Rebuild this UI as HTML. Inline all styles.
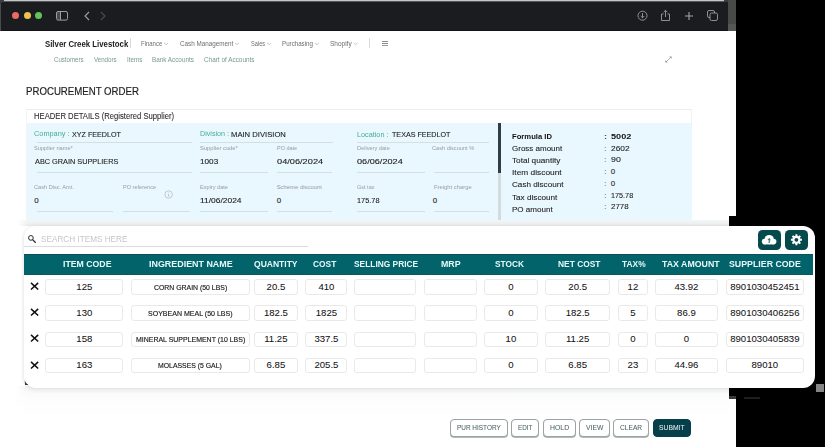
<!DOCTYPE html>
<html><head><meta charset="utf-8">
<style>
*{box-sizing:border-box;margin:0;padding:0}
html,body{width:825px;height:447px;overflow:hidden;background:#000;font-family:"Liberation Sans",sans-serif}
.a{position:absolute}
.t{position:absolute;white-space:nowrap;line-height:1;transform-origin:0 0}
#win{position:absolute;left:0;top:0;width:736px;height:447px;background:#fff;overflow:hidden}
.ul{position:absolute;height:1px;background:#d5dfe3}
.box{position:absolute;height:15.4px;border:1px solid #e9e9e9;border-radius:3px;background:#fff}
.btn{position:absolute;top:418.5px;height:18.2px;border:1px solid #9aa4a4;border-radius:4px;box-shadow:0 0.8px 0.6px #9aa3a3;background:#fff}
</style></head><body>
<div id="win">
  <div class="a" style="left:0;top:0;width:724px;height:1px;background:#c3c6c6"></div>
  <div class="a" style="left:0;top:1px;width:728px;height:1px;background:#55585a"></div>
  <div class="a" style="left:1px;top:2px;width:727px;height:29px;background:#1b1c20"></div>
  <div class="a" style="left:1px;top:30px;width:727px;height:1px;background:#131416"></div>
  <div class="a" style="left:0;top:0;width:1px;height:31px;background:#4a4c4c"></div>
  <div class="a" style="left:0;top:0;width:5px;height:5px;background:linear-gradient(135deg,#3a3d3e 50%,transparent 50%)"></div>
  <div class="a" style="left:724px;top:0;width:4px;height:2px;background:#3a3c3c"></div>
  <div class="a" style="left:728px;top:0;width:8px;height:24px;background:#484a48"></div>
  <div class="a" style="left:728px;top:24px;width:8px;height:7px;background:#555755"></div>
  <div class="a" style="left:12px;top:12px;width:7px;height:7px;border-radius:50%;background:#ec6a63"></div>
  <div class="a" style="left:23.5px;top:12px;width:7px;height:7px;border-radius:50%;background:#f3bf4f"></div>
  <div class="a" style="left:35px;top:12px;width:7px;height:7px;border-radius:50%;background:#61c454"></div>
  <svg class="a" style="left:55px;top:10px" width="15" height="12" viewBox="0 0 15 12"><rect x="2" y="2" width="3.5" height="7.5" fill="#4a4b4e"/><rect x="1.5" y="1.5" width="11" height="8.6" rx="1.5" fill="none" stroke="#9b9c9e" stroke-width="1"/><line x1="5.5" y1="1.5" x2="5.5" y2="10" stroke="#9b9c9e" stroke-width="1"/></svg>
  <svg class="a" style="left:82px;top:10px" width="10" height="12" viewBox="0 0 10 12"><path d="M7 2 L3 6 L7 10" fill="none" stroke="#a0a1a3" stroke-width="1.1"/></svg>
  <svg class="a" style="left:98px;top:10px" width="10" height="12" viewBox="0 0 10 12"><path d="M3 2 L7 6 L3 10" fill="none" stroke="#4a4c4f" stroke-width="1.1"/></svg>
  <svg class="a" style="left:636px;top:9px" width="13" height="13" viewBox="0 0 13 13"><circle cx="6.5" cy="6.7" r="4.5" fill="none" stroke="#9c9da0" stroke-width="0.9"/><path d="M6.5 4 V8.8 M4.7 7 L6.5 8.8 L8.3 7" fill="none" stroke="#9c9da0" stroke-width="0.9"/></svg>
  <svg class="a" style="left:659px;top:8px" width="13" height="14" viewBox="0 0 13 14"><path d="M4.5 6 H2.5 V12.5 H10.5 V6 H8.5" fill="none" stroke="#9c9da0" stroke-width="0.9"/><path d="M6.5 9 V2.3 M4.6 4.2 L6.5 2.3 L8.4 4.2" fill="none" stroke="#9c9da0" stroke-width="0.9"/></svg>
  <svg class="a" style="left:683px;top:10px" width="12" height="12" viewBox="0 0 12 12"><path d="M6 2 V10 M2 6 H10" fill="none" stroke="#a3a4a6" stroke-width="1.1"/></svg>
  <svg class="a" style="left:706px;top:9px" width="13" height="13" viewBox="0 0 13 13"><rect x="1.5" y="1.5" width="7" height="7" rx="1.5" fill="none" stroke="#9c9da0" stroke-width="0.9"/><rect x="4" y="4" width="7.5" height="7.5" rx="1.5" fill="#1b1c20" stroke="#9c9da0" stroke-width="0.9"/></svg>

  <div class="a" style="left:130px;top:38px;width:1px;height:10px;background:#dadada"></div>
  <div class="a" style="left:368.5px;top:38.3px;width:1px;height:9.7px;background:#dadada"></div>
  <div class="a" style="left:382px;top:41px;width:6px;height:1px;background:#8c8c8c"></div><div class="a" style="left:382px;top:43px;width:6px;height:1px;background:#8c8c8c"></div><div class="a" style="left:382px;top:45px;width:6px;height:1px;background:#9a9a9a"></div>
  <svg class="a" style="left:0;top:0" width="400" height="50" viewBox="0 0 400 50"><g fill="none" stroke="#a0a0a0" stroke-width="0.6"><path d="M164 42.8 L166 44.7 L168 42.8"/><path d="M235 42.8 L237 44.7 L239 42.8"/><path d="M267 42.8 L269 44.7 L271 42.8"/><path d="M315 42.8 L317 44.7 L319 42.8"/><path d="M353.6 42.8 L355.6 44.7 L357.6 42.8"/></g></svg>
  <svg class="a" style="left:664px;top:55px" width="9" height="9" viewBox="0 0 9 9"><path d="M2 7 L7 2" stroke="#8f8f8f" stroke-width="0.7"/><path d="M5.2 1.4 H7.6 V3.8 Z M1.4 5.2 V7.6 H3.8 Z" fill="#8f8f8f"/></svg>

  <div class="a" style="left:26px;top:109px;width:666px;height:111px;border:1px solid #ebeded;border-left-color:#f3f4f4;border-right-color:#f1f2f2;border-bottom:none;background:#fff"></div>
  <div class="a" style="left:26.5px;top:123px;width:665.5px;height:97px;background:#e9f8fe"></div>
  <div class="a" style="left:498px;top:123px;width:3px;height:97px;background:#d3dbde"></div>
  <div class="a" style="left:498px;top:123px;width:3px;height:49.5px;background:#2f3e44"></div>

  <div class="ul" style="left:36.5px;top:142px;width:155px"></div>
  <div class="ul" style="left:199.5px;top:142px;width:133px"></div>
  <div class="ul" style="left:356.5px;top:142px;width:132px"></div>
  <div class="ul" style="left:36.5px;top:172px;width:155px"></div>
  <div class="ul" style="left:199.5px;top:172px;width:68px"></div>
  <div class="ul" style="left:276.5px;top:172px;width:55.5px"></div>
  <div class="ul" style="left:356.5px;top:172px;width:68px"></div>
  <div class="ul" style="left:433.5px;top:172px;width:55px"></div>
  <div class="ul" style="left:36.5px;top:211px;width:76px"></div>
  <div class="ul" style="left:122.5px;top:211px;width:67px"></div>
  <div class="ul" style="left:199.5px;top:211px;width:68px"></div>
  <div class="ul" style="left:276.5px;top:211px;width:55.5px"></div>
  <div class="ul" style="left:356.5px;top:211px;width:68px"></div>
  <div class="ul" style="left:433.5px;top:211px;width:55px"></div>
  <svg class="a" style="left:164px;top:190px" width="9" height="9" viewBox="0 0 9 9"><circle cx="4.6" cy="4.5" r="3.7" fill="none" stroke="#a8adb0" stroke-width="0.6"/><path d="M4.6 4 V6.6" stroke="#a8adb0" stroke-width="0.7"/><circle cx="4.6" cy="2.8" r="0.4" fill="#a8adb0"/></svg>

  <div class="btn" style="left:450px;width:57.5px"></div>
  <div class="btn" style="left:511.3px;width:27.7px"></div>
  <div class="btn" style="left:543px;width:32.5px"></div>
  <div class="btn" style="left:579.3px;width:30.6px"></div>
  <div class="btn" style="left:613.3px;width:35.3px"></div>
  <div class="btn" style="left:652.6px;width:38.7px;background:#053f49;border-color:#053f49;box-shadow:none"></div>
</div>

<div class="a" style="left:729px;top:216px;width:96px;height:183px;background:#000"></div>
<div class="a" style="left:816px;top:384px;width:8px;height:8px;background:#858585"></div>
<div class="a" style="left:729px;top:396px;width:7px;height:3px;background:#3a3a3a"></div>
<div class="a" style="left:744px;top:397px;width:16px;height:2px;background:#1e1e1e"></div>

<div class="a" style="left:15px;top:386px;width:714px;height:30px;background:linear-gradient(rgba(40,60,60,0.05),rgba(40,60,60,0.02) 30%,rgba(40,60,60,0));-webkit-mask-image:linear-gradient(90deg,transparent,#000 12px)"></div>
<div class="a" style="left:18px;top:220px;width:711px;height:6px;background:linear-gradient(#f1f6f8,#eef0f0 60%,#e6e8e8);-webkit-mask-image:linear-gradient(90deg,transparent,#000 10px)"></div>
<div class="a" style="left:24px;top:226px;width:791px;height:161.5px;background:#fff;border-radius:12px;box-shadow:-1px 0 3px rgba(0,0,0,0.07),0 3px 4px rgba(0,0,0,0.05)"></div>

<svg class="a" style="left:27px;top:234px" width="10" height="10" viewBox="0 0 10 10"><circle cx="3.9" cy="3.9" r="2.35" fill="none" stroke="#2a2a2a" stroke-width="1.0"/><path d="M5.6 5.6 L8.7 8.7" stroke="#2a2a2a" stroke-width="1.3"/></svg>
<div class="a" style="left:24px;top:246px;width:284px;height:1px;background:#dcdcdc"></div>

<div class="a" style="left:758px;top:229.7px;width:22.6px;height:20px;background:#044a4c;border-radius:4.5px"></div>
<svg class="a" style="left:758px;top:230px" width="23" height="20" viewBox="0 0 23 20"><g fill="#fff"><circle cx="6.6" cy="11.6" r="2.8"/><circle cx="11.2" cy="9.6" r="4.7"/><circle cx="15.6" cy="11.6" r="2.8"/><rect x="6.6" y="10" width="9" height="4.4"/></g><path d="M11.2 13 V8.6 M9.9 9.9 L11.2 8.6 L12.5 9.9" fill="none" stroke="#044a4c" stroke-width="0.9"/></svg>
<div class="a" style="left:785.2px;top:229.7px;width:22.6px;height:20px;background:#044a4c;border-radius:4.5px"></div>
<svg class="a" style="left:785px;top:230px" width="23" height="20" viewBox="0 0 23 20"><path d="M15.36 8.75 L16.92 8.85 L16.92 10.75 L15.36 10.85 L14.95 11.86 L15.97 13.03 L14.63 14.37 L13.46 13.35 L12.45 13.76 L12.35 15.32 L10.45 15.32 L10.35 13.76 L9.34 13.35 L8.17 14.37 L6.83 13.03 L7.85 11.86 L7.44 10.85 L5.88 10.75 L5.88 8.85 L7.44 8.75 L7.85 7.74 L6.83 6.57 L8.17 5.23 L9.34 6.25 L10.35 5.84 L10.45 4.28 L12.35 4.28 L12.45 5.84 L13.46 6.25 L14.63 5.23 L15.97 6.57 L14.95 7.74 Z" fill="#fff"/><circle cx="11.4" cy="9.8" r="1.9" fill="#044a4c"/></svg>

<div class="a" style="left:24px;top:253.5px;width:789px;height:21.2px;background:#02636a;border-top:1px solid #0a5059;border-bottom:1px solid #0a5860"></div>
<svg class="a" style="left:24px;top:380px" width="6" height="6" viewBox="0 0 6 6"><path d="M0.8 0.5 Q1.5 3.5 4.5 5 L1 5 Z" fill="#333"/></svg>
<svg class="a" style="left:30px;top:281.9px" width="9.2" height="8.4" viewBox="0 0 9.2 8.4"><path d="M1 0.9 L8.2 7.5 M8.2 0.9 L1 7.5" stroke="#111" stroke-width="1.5"/></svg>
<div class="box" style="left:45.3px;top:279.3px;width:78.1px"></div>
<div class="box" style="left:131.0px;top:279.3px;width:118.5px"></div>
<div class="box" style="left:253.8px;top:279.3px;width:44.2px"></div>
<div class="box" style="left:305.3px;top:279.3px;width:42.2px"></div>
<div class="box" style="left:354.2px;top:279.3px;width:61.4px"></div>
<div class="box" style="left:423.5px;top:279.3px;width:53.0px"></div>
<div class="box" style="left:484.3px;top:279.3px;width:53.3px"></div>
<div class="box" style="left:544.9px;top:279.3px;width:65.5px"></div>
<div class="box" style="left:618.3px;top:279.3px;width:29.3px"></div>
<div class="box" style="left:655.2px;top:279.3px;width:62.4px"></div>
<div class="box" style="left:726.1px;top:279.3px;width:77.5px"></div>
<svg class="a" style="left:30px;top:308.0px" width="9.2" height="8.4" viewBox="0 0 9.2 8.4"><path d="M1 0.9 L8.2 7.5 M8.2 0.9 L1 7.5" stroke="#111" stroke-width="1.5"/></svg>
<div class="box" style="left:45.3px;top:305.4px;width:78.1px"></div>
<div class="box" style="left:131.0px;top:305.4px;width:118.5px"></div>
<div class="box" style="left:253.8px;top:305.4px;width:44.2px"></div>
<div class="box" style="left:305.3px;top:305.4px;width:42.2px"></div>
<div class="box" style="left:354.2px;top:305.4px;width:61.4px"></div>
<div class="box" style="left:423.5px;top:305.4px;width:53.0px"></div>
<div class="box" style="left:484.3px;top:305.4px;width:53.3px"></div>
<div class="box" style="left:544.9px;top:305.4px;width:65.5px"></div>
<div class="box" style="left:618.3px;top:305.4px;width:29.3px"></div>
<div class="box" style="left:655.2px;top:305.4px;width:62.4px"></div>
<div class="box" style="left:726.1px;top:305.4px;width:77.5px"></div>
<svg class="a" style="left:30px;top:334.4px" width="9.2" height="8.4" viewBox="0 0 9.2 8.4"><path d="M1 0.9 L8.2 7.5 M8.2 0.9 L1 7.5" stroke="#111" stroke-width="1.5"/></svg>
<div class="box" style="left:45.3px;top:331.8px;width:78.1px"></div>
<div class="box" style="left:131.0px;top:331.8px;width:118.5px"></div>
<div class="box" style="left:253.8px;top:331.8px;width:44.2px"></div>
<div class="box" style="left:305.3px;top:331.8px;width:42.2px"></div>
<div class="box" style="left:354.2px;top:331.8px;width:61.4px"></div>
<div class="box" style="left:423.5px;top:331.8px;width:53.0px"></div>
<div class="box" style="left:484.3px;top:331.8px;width:53.3px"></div>
<div class="box" style="left:544.9px;top:331.8px;width:65.5px"></div>
<div class="box" style="left:618.3px;top:331.8px;width:29.3px"></div>
<div class="box" style="left:655.2px;top:331.8px;width:62.4px"></div>
<div class="box" style="left:726.1px;top:331.8px;width:77.5px"></div>
<svg class="a" style="left:30px;top:360.7px" width="9.2" height="8.4" viewBox="0 0 9.2 8.4"><path d="M1 0.9 L8.2 7.5 M8.2 0.9 L1 7.5" stroke="#111" stroke-width="1.5"/></svg>
<div class="box" style="left:45.3px;top:358.1px;width:78.1px"></div>
<div class="box" style="left:131.0px;top:358.1px;width:118.5px"></div>
<div class="box" style="left:253.8px;top:358.1px;width:44.2px"></div>
<div class="box" style="left:305.3px;top:358.1px;width:42.2px"></div>
<div class="box" style="left:354.2px;top:358.1px;width:61.4px"></div>
<div class="box" style="left:423.5px;top:358.1px;width:53.0px"></div>
<div class="box" style="left:484.3px;top:358.1px;width:53.3px"></div>
<div class="box" style="left:544.9px;top:358.1px;width:65.5px"></div>
<div class="box" style="left:618.3px;top:358.1px;width:29.3px"></div>
<div class="box" style="left:655.2px;top:358.1px;width:62.4px"></div>
<div class="box" style="left:726.1px;top:358.1px;width:77.5px"></div>
<div class="t" style="left:45.10px;top:40.21px;font-size:8.6px;color:#1c1c1c;font-weight:bold;transform:scaleX(0.908);">Silver Creek Livestock</div>
<div class="t" style="left:141.00px;top:40.01px;font-size:7.2px;color:#6e6e6e;transform:scaleX(0.831);">Finance</div>
<div class="t" style="left:179.60px;top:40.01px;font-size:7.2px;color:#6e6e6e;transform:scaleX(0.878);">Cash Management</div>
<div class="t" style="left:250.70px;top:40.01px;font-size:7.2px;color:#6e6e6e;transform:scaleX(0.783);">Sales</div>
<div class="t" style="left:281.70px;top:40.01px;font-size:7.2px;color:#6e6e6e;transform:scaleX(0.861);">Purchasing</div>
<div class="t" style="left:329.80px;top:40.01px;font-size:7.2px;color:#6e6e6e;transform:scaleX(0.904);">Shopify</div>
<div class="t" style="left:54.00px;top:56.90px;font-size:6.9px;color:#769893;transform:scaleX(0.887);">Customers</div>
<div class="t" style="left:94.00px;top:56.90px;font-size:6.9px;color:#769893;transform:scaleX(0.893);">Vendors</div>
<div class="t" style="left:126.90px;top:56.90px;font-size:6.9px;color:#769893;transform:scaleX(0.907);">Items</div>
<div class="t" style="left:151.90px;top:56.90px;font-size:6.9px;color:#769893;transform:scaleX(0.918);">Bank Accounts</div>
<div class="t" style="left:203.60px;top:56.90px;font-size:6.9px;color:#769893;transform:scaleX(0.929);">Chart of Accounts</div>
<div class="t" style="left:26.00px;top:85.66px;font-size:10.9px;color:#1f1f1f;transform:scaleX(0.886);-webkit-text-stroke:0.2px #1f1f1f;">PROCUREMENT ORDER</div>
<div class="t" style="left:33.60px;top:112.01px;font-size:8.4px;color:#2b2b2b;transform:scaleX(0.916);-webkit-text-stroke:0.08px #2b2b2b;">HEADER DETAILS (Registered Supplier)</div>
<div class="t" style="left:34.00px;top:130.81px;font-size:7.1px;color:#45ab9c;transform:scaleX(1.034);">Company :</div>
<div class="t" style="left:72.20px;top:130.72px;font-size:7.3px;color:#1c1c1c;transform:scaleX(0.982);-webkit-text-stroke:0.1px #1c1c1c;">XYZ FEEDLOT</div>
<div class="t" style="left:199.80px;top:131.31px;font-size:7.1px;color:#45ab9c;transform:scaleX(1.007);">Division :</div>
<div class="t" style="left:231.00px;top:130.51px;font-size:7.5px;color:#1c1c1c;transform:scaleX(1.021);-webkit-text-stroke:0.1px #1c1c1c;">MAIN DIVISION</div>
<div class="t" style="left:357.00px;top:131.81px;font-size:7.1px;color:#45ab9c;transform:scaleX(1.023);">Location :</div>
<div class="t" style="left:392.20px;top:130.81px;font-size:7.3px;color:#1c1c1c;transform:scaleX(0.979);-webkit-text-stroke:0.1px #1c1c1c;">TEXAS FEEDLOT</div>
<div class="t" style="left:34.00px;top:145.60px;font-size:5.9px;color:#979b9e;transform:scaleX(0.964);">Supplier name*</div>
<div class="t" style="left:199.80px;top:145.60px;font-size:5.9px;color:#979b9e;transform:scaleX(0.988);">Supplier code*</div>
<div class="t" style="left:276.70px;top:145.60px;font-size:5.9px;color:#979b9e;transform:scaleX(0.933);">PO date</div>
<div class="t" style="left:357.00px;top:145.60px;font-size:5.9px;color:#979b9e;transform:scaleX(0.953);">Delivery date</div>
<div class="t" style="left:432.30px;top:145.60px;font-size:5.9px;color:#979b9e;transform:scaleX(0.953);">Cash discount %</div>
<div class="t" style="left:34.00px;top:184.91px;font-size:5.9px;color:#979b9e;transform:scaleX(0.951);">Cash Disc. Amt.</div>
<div class="t" style="left:123.10px;top:184.91px;font-size:5.9px;color:#979b9e;transform:scaleX(0.943);">PO reference</div>
<div class="t" style="left:199.80px;top:184.91px;font-size:5.9px;color:#979b9e;transform:scaleX(0.949);">Expiry date</div>
<div class="t" style="left:276.70px;top:184.91px;font-size:5.9px;color:#979b9e;">Scheme discount</div>
<div class="t" style="left:357.00px;top:184.91px;font-size:5.9px;color:#979b9e;transform:scaleX(0.937);">Gst tax</div>
<div class="t" style="left:433.70px;top:184.91px;font-size:5.9px;color:#979b9e;transform:scaleX(0.994);">Freight charge</div>
<div class="t" style="left:34.60px;top:158.21px;font-size:7.9px;color:#1e1e1e;transform:scaleX(0.928);-webkit-text-stroke:0.12px #1e1e1e;">ABC GRAIN SUPPLIERS</div>
<div class="t" style="left:199.80px;top:158.21px;font-size:7.9px;color:#1e1e1e;transform:scaleX(1.035);-webkit-text-stroke:0.12px #1e1e1e;">1003</div>
<div class="t" style="left:276.70px;top:158.21px;font-size:7.9px;color:#1e1e1e;transform:scaleX(1.168);-webkit-text-stroke:0.12px #1e1e1e;">04/06/2024</div>
<div class="t" style="left:357.00px;top:158.21px;font-size:7.9px;color:#1e1e1e;transform:scaleX(1.158);-webkit-text-stroke:0.12px #1e1e1e;">06/06/2024</div>
<div class="t" style="left:34.20px;top:196.61px;font-size:7.9px;color:#1e1e1e;-webkit-text-stroke:0.12px #1e1e1e;">0</div>
<div class="t" style="left:199.80px;top:196.61px;font-size:7.9px;color:#1e1e1e;transform:scaleX(1.068);-webkit-text-stroke:0.12px #1e1e1e;">11/06/2024</div>
<div class="t" style="left:276.70px;top:196.61px;font-size:7.9px;color:#1e1e1e;-webkit-text-stroke:0.12px #1e1e1e;">0</div>
<div class="t" style="left:357.00px;top:196.61px;font-size:7.9px;color:#1e1e1e;transform:scaleX(0.931);-webkit-text-stroke:0.12px #1e1e1e;">175.78</div>
<div class="t" style="left:432.70px;top:196.61px;font-size:7.9px;color:#1e1e1e;-webkit-text-stroke:0.12px #1e1e1e;">0</div>
<div class="t" style="left:511.90px;top:132.91px;font-size:7.8px;color:#111;font-weight:bold;transform:scaleX(0.982);">Formula ID</div>
<div class="t" style="left:511.90px;top:145.03px;font-size:7.8px;color:#1e1e1e;transform:scaleX(1.025);-webkit-text-stroke:0.1px #1e1e1e;">Gross amount</div>
<div class="t" style="left:511.90px;top:157.15px;font-size:7.8px;color:#1e1e1e;transform:scaleX(1.053);-webkit-text-stroke:0.1px #1e1e1e;">Total quantity</div>
<div class="t" style="left:511.90px;top:169.26px;font-size:7.8px;color:#1e1e1e;transform:scaleX(1.071);-webkit-text-stroke:0.1px #1e1e1e;">Item discount</div>
<div class="t" style="left:511.90px;top:181.40px;font-size:7.8px;color:#1e1e1e;transform:scaleX(1.042);-webkit-text-stroke:0.1px #1e1e1e;">Cash discount</div>
<div class="t" style="left:511.90px;top:193.51px;font-size:7.8px;color:#1e1e1e;transform:scaleX(1.047);-webkit-text-stroke:0.1px #1e1e1e;">Tax discount</div>
<div class="t" style="left:511.90px;top:205.63px;font-size:7.8px;color:#1e1e1e;transform:scaleX(1.032);-webkit-text-stroke:0.1px #1e1e1e;">PO amount</div>
<div class="t" style="left:604.30px;top:133.01px;font-size:7.4px;color:#262626;font-weight:bold;">:</div>
<div class="t" style="left:610.80px;top:133.01px;font-size:7.9px;color:#111;font-weight:bold;transform:scaleX(1.155);">5002</div>
<div class="t" style="left:604.30px;top:144.74px;font-size:7.4px;color:#262626;">:</div>
<div class="t" style="left:610.80px;top:144.74px;font-size:7.9px;color:#1e1e1e;transform:scaleX(1.064);-webkit-text-stroke:0.1px #1e1e1e;">2602</div>
<div class="t" style="left:604.30px;top:156.49px;font-size:7.4px;color:#262626;">:</div>
<div class="t" style="left:610.80px;top:156.48px;font-size:7.9px;color:#1e1e1e;transform:scaleX(1.116);-webkit-text-stroke:0.1px #1e1e1e;">90</div>
<div class="t" style="left:604.30px;top:168.23px;font-size:7.4px;color:#262626;">:</div>
<div class="t" style="left:610.80px;top:168.23px;font-size:7.9px;color:#1e1e1e;-webkit-text-stroke:0.1px #1e1e1e;">0</div>
<div class="t" style="left:604.30px;top:179.96px;font-size:7.4px;color:#262626;">:</div>
<div class="t" style="left:610.80px;top:179.96px;font-size:7.9px;color:#1e1e1e;-webkit-text-stroke:0.1px #1e1e1e;">0</div>
<div class="t" style="left:604.30px;top:191.71px;font-size:7.4px;color:#262626;">:</div>
<div class="t" style="left:610.80px;top:191.70px;font-size:7.9px;color:#1e1e1e;transform:scaleX(0.919);-webkit-text-stroke:0.1px #1e1e1e;">175.78</div>
<div class="t" style="left:604.30px;top:203.45px;font-size:7.4px;color:#262626;">:</div>
<div class="t" style="left:610.80px;top:203.45px;font-size:7.9px;color:#1e1e1e;transform:scaleX(1.007);-webkit-text-stroke:0.1px #1e1e1e;">2778</div>
<div class="t" style="left:41.10px;top:234.50px;font-size:8.6px;color:#c6c6c6;transform:scaleX(0.953);">SEARCH ITEMS HERE</div>
<div class="t" style="left:62.60px;top:260.30px;font-size:9.1px;color:#e8fafa;font-weight:bold;transform:scaleX(0.959);">ITEM CODE</div>
<div class="t" style="left:148.60px;top:260.30px;font-size:9.1px;color:#e8fafa;font-weight:bold;transform:scaleX(0.980);">INGREDIENT NAME</div>
<div class="t" style="left:254.40px;top:260.30px;font-size:9.1px;color:#e8fafa;font-weight:bold;transform:scaleX(0.937);">QUANTITY</div>
<div class="t" style="left:312.60px;top:260.30px;font-size:9.1px;color:#e8fafa;font-weight:bold;transform:scaleX(0.922);">COST</div>
<div class="t" style="left:353.60px;top:260.30px;font-size:9.1px;color:#e8fafa;font-weight:bold;transform:scaleX(0.920);">SELLING PRICE</div>
<div class="t" style="left:440.80px;top:260.30px;font-size:9.1px;color:#e8fafa;font-weight:bold;transform:scaleX(0.969);">MRP</div>
<div class="t" style="left:495.40px;top:260.30px;font-size:9.1px;color:#e8fafa;font-weight:bold;transform:scaleX(0.915);">STOCK</div>
<div class="t" style="left:557.50px;top:260.30px;font-size:9.1px;color:#e8fafa;font-weight:bold;transform:scaleX(0.924);">NET COST</div>
<div class="t" style="left:621.50px;top:260.30px;font-size:9.1px;color:#e8fafa;font-weight:bold;transform:scaleX(0.921);">TAX%</div>
<div class="t" style="left:661.50px;top:260.30px;font-size:9.1px;color:#e8fafa;font-weight:bold;transform:scaleX(0.967);">TAX AMOUNT</div>
<div class="t" style="left:729.20px;top:260.30px;font-size:9.1px;color:#e8fafa;font-weight:bold;transform:scaleX(0.967);">SUPPLIER CODE</div>
<div class="t" style="left:76.34px;top:281.61px;font-size:9.6px;color:#121212;-webkit-text-stroke:0.05px #121212;">125</div>
<div class="t" style="left:153.65px;top:283.61px;font-size:7.3px;color:#1a1a1a;transform:scaleX(0.945);-webkit-text-stroke:0.15px #1a1a1a;">CORN GRAIN (50 LBS)</div>
<div class="t" style="left:266.56px;top:281.61px;font-size:9.6px;color:#121212;-webkit-text-stroke:0.05px #121212;">20.5</div>
<div class="t" style="left:318.39px;top:281.61px;font-size:9.6px;color:#121212;-webkit-text-stroke:0.05px #121212;">410</div>
<div class="t" style="left:508.28px;top:281.61px;font-size:9.6px;color:#121212;-webkit-text-stroke:0.05px #121212;">0</div>
<div class="t" style="left:568.31px;top:281.61px;font-size:9.6px;color:#121212;-webkit-text-stroke:0.05px #121212;">20.5</div>
<div class="t" style="left:627.61px;top:281.61px;font-size:9.6px;color:#121212;-webkit-text-stroke:0.05px #121212;">12</div>
<div class="t" style="left:674.39px;top:281.61px;font-size:9.6px;color:#121212;-webkit-text-stroke:0.05px #121212;">43.92</div>
<div class="t" style="left:730.15px;top:281.61px;font-size:9.6px;color:#121212;-webkit-text-stroke:0.05px #121212;">8901030452451</div>
<div class="t" style="left:76.34px;top:307.71px;font-size:9.6px;color:#121212;-webkit-text-stroke:0.05px #121212;">130</div>
<div class="t" style="left:147.95px;top:309.71px;font-size:7.3px;color:#1a1a1a;transform:scaleX(0.964);-webkit-text-stroke:0.15px #1a1a1a;">SOYBEAN MEAL (50 LBS)</div>
<div class="t" style="left:263.89px;top:307.71px;font-size:9.6px;color:#121212;-webkit-text-stroke:0.05px #121212;">182.5</div>
<div class="t" style="left:315.72px;top:307.71px;font-size:9.6px;color:#121212;-webkit-text-stroke:0.05px #121212;">1825</div>
<div class="t" style="left:508.28px;top:307.71px;font-size:9.6px;color:#121212;-webkit-text-stroke:0.05px #121212;">0</div>
<div class="t" style="left:565.64px;top:307.71px;font-size:9.6px;color:#121212;-webkit-text-stroke:0.05px #121212;">182.5</div>
<div class="t" style="left:630.28px;top:307.71px;font-size:9.6px;color:#121212;-webkit-text-stroke:0.05px #121212;">5</div>
<div class="t" style="left:677.06px;top:307.71px;font-size:9.6px;color:#121212;-webkit-text-stroke:0.05px #121212;">86.9</div>
<div class="t" style="left:730.15px;top:307.71px;font-size:9.6px;color:#121212;-webkit-text-stroke:0.05px #121212;">8901030406256</div>
<div class="t" style="left:76.34px;top:334.11px;font-size:9.6px;color:#121212;-webkit-text-stroke:0.05px #121212;">158</div>
<div class="t" style="left:135.60px;top:336.11px;font-size:7.3px;color:#1a1a1a;transform:scaleX(0.955);-webkit-text-stroke:0.15px #1a1a1a;">MINERAL SUPPLEMENT (10 LBS)</div>
<div class="t" style="left:264.25px;top:334.11px;font-size:9.6px;color:#121212;-webkit-text-stroke:0.05px #121212;">11.25</div>
<div class="t" style="left:314.39px;top:334.11px;font-size:9.6px;color:#121212;-webkit-text-stroke:0.05px #121212;">337.5</div>
<div class="t" style="left:505.61px;top:334.11px;font-size:9.6px;color:#121212;-webkit-text-stroke:0.05px #121212;">10</div>
<div class="t" style="left:566.00px;top:334.11px;font-size:9.6px;color:#121212;-webkit-text-stroke:0.05px #121212;">11.25</div>
<div class="t" style="left:630.28px;top:334.11px;font-size:9.6px;color:#121212;-webkit-text-stroke:0.05px #121212;">0</div>
<div class="t" style="left:683.73px;top:334.11px;font-size:9.6px;color:#121212;-webkit-text-stroke:0.05px #121212;">0</div>
<div class="t" style="left:730.15px;top:334.11px;font-size:9.6px;color:#121212;-webkit-text-stroke:0.05px #121212;">8901030405839</div>
<div class="t" style="left:76.34px;top:360.40px;font-size:9.6px;color:#121212;-webkit-text-stroke:0.05px #121212;">163</div>
<div class="t" style="left:158.35px;top:362.40px;font-size:7.3px;color:#1a1a1a;transform:scaleX(0.942);-webkit-text-stroke:0.15px #1a1a1a;">MOLASSES (5 GAL)</div>
<div class="t" style="left:266.56px;top:360.40px;font-size:9.6px;color:#121212;-webkit-text-stroke:0.05px #121212;">6.85</div>
<div class="t" style="left:314.39px;top:360.40px;font-size:9.6px;color:#121212;-webkit-text-stroke:0.05px #121212;">205.5</div>
<div class="t" style="left:508.28px;top:360.40px;font-size:9.6px;color:#121212;-webkit-text-stroke:0.05px #121212;">0</div>
<div class="t" style="left:568.31px;top:360.40px;font-size:9.6px;color:#121212;-webkit-text-stroke:0.05px #121212;">6.85</div>
<div class="t" style="left:627.61px;top:360.40px;font-size:9.6px;color:#121212;-webkit-text-stroke:0.05px #121212;">23</div>
<div class="t" style="left:674.39px;top:360.40px;font-size:9.6px;color:#121212;-webkit-text-stroke:0.05px #121212;">44.96</div>
<div class="t" style="left:751.50px;top:360.40px;font-size:9.6px;color:#121212;-webkit-text-stroke:0.05px #121212;">89010</div>
<div class="t" style="left:456.85px;top:424.41px;font-size:7.5px;color:#4b6464;transform:scaleX(0.857);-webkit-text-stroke:0.05px currentColor;">PUR HISTORY</div>
<div class="t" style="left:517.95px;top:424.41px;font-size:7.5px;color:#4b6464;transform:scaleX(0.843);-webkit-text-stroke:0.05px currentColor;">EDIT</div>
<div class="t" style="left:549.70px;top:424.41px;font-size:7.5px;color:#4b6464;transform:scaleX(0.917);-webkit-text-stroke:0.05px currentColor;">HOLD</div>
<div class="t" style="left:585.95px;top:424.41px;font-size:7.5px;color:#4b6464;transform:scaleX(0.902);-webkit-text-stroke:0.05px currentColor;">VIEW</div>
<div class="t" style="left:619.90px;top:424.41px;font-size:7.5px;color:#4b6464;transform:scaleX(0.884);-webkit-text-stroke:0.05px currentColor;">CLEAR</div>
<div class="t" style="left:659.20px;top:424.41px;font-size:7.5px;color:#e4ecec;transform:scaleX(0.900);-webkit-text-stroke:0.05px currentColor;">SUBMIT</div>
</body></html>
